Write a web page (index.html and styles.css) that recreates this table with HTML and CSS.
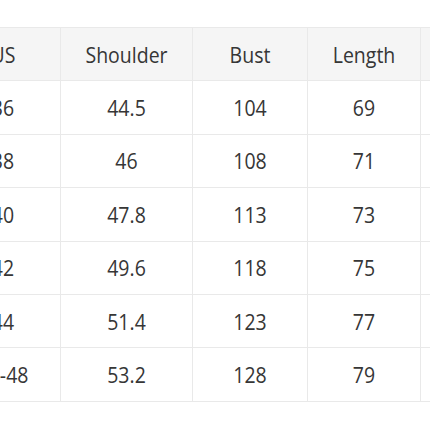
FILE: index.html
```html
<!DOCTYPE html>
<html>
<head>
<meta charset="utf-8">
<link rel="stylesheet" href="styles.css">
</head>
<body>
<div class="wrap">
<table class="size-table">
  <colgroup>
    <col class="c1"><col class="c2"><col class="c3"><col class="c4"><col class="c5">
  </colgroup>
  <thead>
    <tr><th><span>US</span></th><th><span>Shoulder</span></th><th><span>Bust</span></th><th><span>Length</span></th><th></th></tr>
  </thead>
  <tbody>
    <tr><td><span>36</span></td><td><span>44.5</span></td><td><span>104</span></td><td><span>69</span></td><td></td></tr>
    <tr><td><span>38</span></td><td><span>46</span></td><td><span>108</span></td><td><span>71</span></td><td></td></tr>
    <tr><td><span>40</span></td><td><span>47.8</span></td><td><span>113</span></td><td><span>73</span></td><td></td></tr>
    <tr><td><span>42</span></td><td><span>49.6</span></td><td><span>118</span></td><td><span>75</span></td><td></td></tr>
    <tr><td><span>44</span></td><td><span>51.4</span></td><td><span>123</span></td><td><span>77</span></td><td></td></tr>
    <tr><td><span>44-48</span></td><td><span>53.2</span></td><td><span>128</span></td><td><span>79</span></td><td></td></tr>
  </tbody>
</table>
</div>
</body>
</html>
```

FILE: styles.css
```css
html, body {
  margin: 0;
  padding: 0;
  background: #ffffff;
  width: 430px;
  height: 430px;
  overflow: hidden;
}

.wrap {
  padding-top: 27px;
  margin-left: -55px;
}

.size-table {
  border-collapse: collapse;
  table-layout: fixed;
  width: 590px;
  font-family: "Open Sans", "Noto Sans", sans-serif;
  font-size: 19.5px;
  color: #363636;
}

.c1 { width: 115px; }
.c2 { width: 132px; }
.c3 { width: 115px; }
.c4 { width: 113px; }
.c5 { width: 115px; }

.size-table th,
.size-table td {
  border: 1px solid #e9e9e9;
  height: 52.4px;
  padding: 0;
  text-align: center;
  vertical-align: middle;
  font-weight: 400;
}

.size-table span {
  display: inline-block;
  transform: scaleY(1.1);
}

.size-table thead th {
  background: #f5f5f5;
}
```
